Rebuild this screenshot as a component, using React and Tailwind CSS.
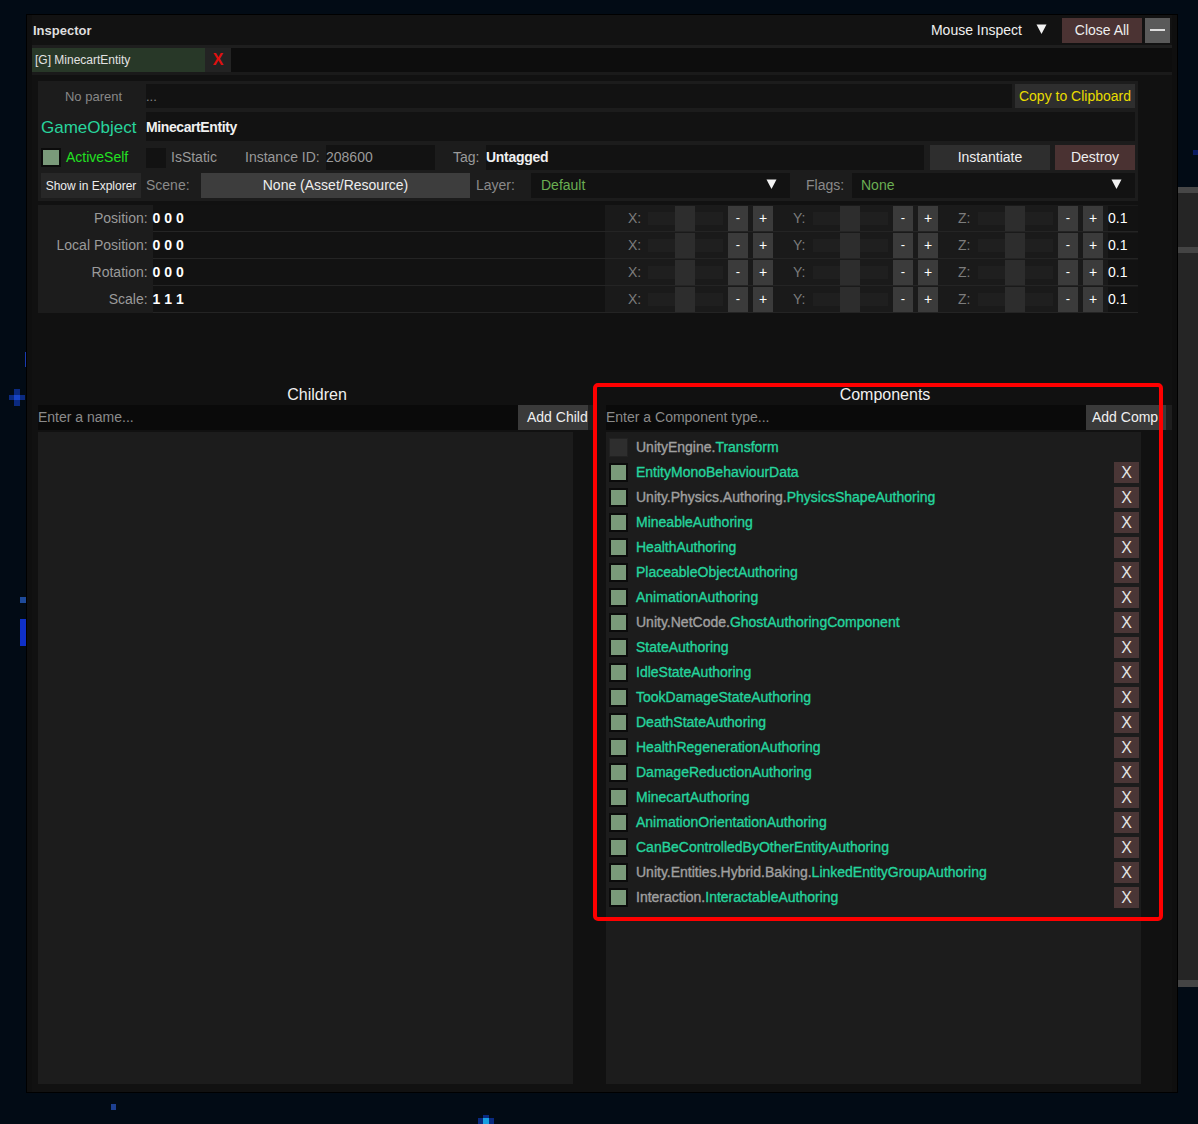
import React from "react";

const Tri = () => (
  <svg width="11" height="10" viewBox="0 0 11 10" className="shrink-0">
    <polygon points="0.5,0.5 10.5,0.5 5.5,10" fill="#f2f2f2" />
  </svg>
);

const comps = [
  ["UnityEngine.", "Transform", false],
  ["", "EntityMonoBehaviourData", true],
  ["Unity.Physics.Authoring.", "PhysicsShapeAuthoring", true],
  ["", "MineableAuthoring", true],
  ["", "HealthAuthoring", true],
  ["", "PlaceableObjectAuthoring", true],
  ["", "AnimationAuthoring", true],
  ["Unity.NetCode.", "GhostAuthoringComponent", true],
  ["", "StateAuthoring", true],
  ["", "IdleStateAuthoring", true],
  ["", "TookDamageStateAuthoring", true],
  ["", "DeathStateAuthoring", true],
  ["", "HealthRegenerationAuthoring", true],
  ["", "DamageReductionAuthoring", true],
  ["", "MinecartAuthoring", true],
  ["", "AnimationOrientationAuthoring", true],
  ["", "CanBeControlledByOtherEntityAuthoring", true],
  ["Unity.Entities.Hybrid.Baking.", "LinkedEntityGroupAuthoring", true],
  ["Interaction.", "InteractableAuthoring", true],
];

const transforms = [
  ["Position", "0 0 0"],
  ["Local Position", "0 0 0"],
  ["Rotation", "0 0 0"],
  ["Scale", "1 1 1"],
];

function AxisGroup({ label }) {
  return (
    <div className="flex items-center h-[25px] w-[145px] shrink-0">
      <span className="w-[20px] text-[14px] text-[#7c7c7c]">{label}:</span>
      <div className="flex items-center w-[75px] h-[25px]">
        <div className="w-[27px] h-[13px] bg-[#1f1f1f]" />
        <div className="w-[20px] h-[25px] bg-[#2d2d2d]" />
        <div className="w-[28px] h-[13px] bg-[#1f1f1f]" />
      </div>
      <div className="ml-[5px] w-[20px] h-[25px] bg-[#3b3b3b] text-white text-[13px] flex items-center justify-center">-</div>
      <div className="ml-[5px] w-[20px] h-[25px] bg-[#3b3b3b] text-white text-[14px] flex items-center justify-center">+</div>
    </div>
  );
}

function TransformRow({ label, value }) {
  return (
    <div className="flex h-[27px]">
      <div className="w-[115px] bg-[#1c1c1c] text-right pr-[5px] text-[14px] text-[#9a9a9a] leading-[27px]">{label}:</div>
      <div className="w-[454px] bg-[#121212] border-b border-[#242424] flex items-center text-[14px] font-bold text-white">{value}</div>
      <div className="flex-1 bg-[#1a1a1a] border-b border-[#242424] flex items-center pl-[23px]">
        <AxisGroup label="X" />
        <div className="w-[20px] shrink-0" />
        <AxisGroup label="Y" />
        <div className="w-[20px] shrink-0" />
        <AxisGroup label="Z" />
        <div className="ml-[5px] w-[30px] h-[25px] bg-[#121212] text-white text-[14px] flex items-center">0.1</div>
      </div>
    </div>
  );
}

function CompRow({ ns, name, on }) {
  return (
    <div className="flex items-center h-[25px]">
      <div className={on ? "w-[19px] h-[19px] bg-[#0b0b0b] p-[2px] shrink-0" : "w-[19px] h-[19px] bg-[#222222] p-[1px] shrink-0"}>
        <div className={on ? "w-full h-full bg-[#7a9a7a]" : "w-full h-full bg-[#2e2e2e]"} />
      </div>
      <div className="ml-[8px] flex-1 text-[14px] tracking-[0px] whitespace-nowrap [-webkit-text-stroke:0.35px]">
        <span className="text-[#a0a0a0]">{ns}</span>
        <span className="text-[#25d49c]">{name}</span>
      </div>
      {on && (
        <div className="w-[25px] h-[21px] bg-[#4a3636] text-[#e6e6e6] text-[16px] flex items-center justify-center">X</div>
      )}
    </div>
  );
}

export default function App() {
  return (
    <div className="relative w-[1198px] h-[1124px] overflow-hidden bg-[#020b15] font-['Liberation_Sans',Arial,sans-serif]">
      {/* backdrop decorations */}
      <div className="absolute left-[1178px] top-[187px] w-[20px] h-[800px] bg-[#252525] flex flex-col">
        <div className="h-[6px] bg-[#474747]" />
        <div className="h-[54px]" />
        <div className="h-[6px] bg-[#444444]" />
        <div className="flex-1" />
        <div className="h-[7px] bg-[#444444]" />
      </div>
      <div className="absolute left-[9px] top-[395px] w-[16px] h-[5px] bg-[#0b2a80]" />
      <div className="absolute left-[14px] top-[389px] w-[6px] h-[17px] bg-[#0b2a80]" />
      <div className="absolute left-[14px] top-[395px] w-[6px] h-[5px] bg-[#1744c8]" />
      <div className="absolute left-[25px] top-[352px] w-[1px] h-[15px] bg-[#1a3ab0]" />
      <div className="absolute left-[20px] top-[597px] w-[6px] h-[6px] bg-[#1e4a9a]" />
      <div className="absolute left-[20px] top-[619px] w-[6px] h-[27px] bg-[#0f30c8]" />
      <div className="absolute left-[111px] top-[1104px] w-[5px] h-[6px] bg-[#1e4090]" />
      <div className="absolute left-[478px] top-[1118px] w-[16px] h-[6px] bg-[#0a2a80]" />
      <div className="absolute left-[483px] top-[1115px] w-[6px] h-[9px] bg-[#0a2a80]" />
      <div className="absolute left-[483px] top-[1118px] w-[6px] h-[6px] bg-[#18a0e0]" />
      <div className="absolute left-[1193px] top-[150px] w-[5px] h-[5px] bg-[#0a1a60]" />

      {/* window */}
      <div className="absolute left-[26px] top-[14px] w-[1152px] h-[1079px] border border-black bg-[#0f0f0f] px-[5px] flex flex-col">
        {/* title bar */}
        <div className="h-[30px] bg-[#121212] flex items-center pl-[1px] pr-[2px]">
          <span className="text-[13px] font-bold text-[#dedede] mt-[2px]">Inspector</span>
          <div className="flex-1" />
          <span className="text-[14px] text-[#f0f0f0] mt-[1px]">Mouse Inspect</span>
          <div className="ml-[14px] mb-[3px]"><Tri /></div>
          <div className="ml-[15px] w-[80px] h-[25px] bg-[#4b3333] text-[14px] text-[#eeeeee] flex items-center justify-center">Close All</div>
          <div className="ml-[3px] w-[25px] h-[25px] bg-[#5a5a5a] flex items-center justify-center">
            <div className="w-[15px] h-[2px] bg-[#dddddd]" />
          </div>
        </div>
        <div className="h-[3px] bg-[#1e1e1e]" />
        {/* tab row */}
        <div className="h-[24px] bg-[#0d0d0d] flex">
          <div className="w-[173px] bg-[#283828] flex items-center pl-[3px] text-[12px] text-[#e2e2e2]">[G] MinecartEntity</div>
          <div className="w-[26px] bg-[#232323] flex items-center justify-center text-[16px] font-bold text-[#e01010]">X</div>
        </div>
        <div className="h-[3px] bg-[#1a1a1a]" />

        {/* content */}
        <div className="flex-1 bg-[#111111] pl-[6px] pt-[6px] flex flex-col">
          {/* header panel */}
          <div className="w-[1100px] h-[120px] bg-[#1c1c1c] p-[3px] flex flex-col">
            <div className="flex h-[24px]">
              <div className="w-[105px] flex items-center justify-center pt-[2px] text-[13px] text-[#888888]">No parent</div>
              <div className="flex-1 bg-[#121212] flex items-center pt-[2px] text-[13px] text-[#888888]">...</div>
              <div className="ml-[3px] w-[120px] bg-[#2e2e2e] flex items-center justify-center pt-[1px] text-[14px] text-[#e8dc00]">Copy to Clipboard</div>
            </div>
            <div className="flex h-[29px] mt-[4px]">
              <div className="w-[105px] flex items-center pt-[2px] text-[17px] text-[#28d49c]">GameObject</div>
              <div className="flex-1 bg-[#121212] flex items-center pt-[2px] text-[14px] font-bold tracking-[-0.4px] text-[#f0f0f0]">MinecartEntity</div>
            </div>
            <div className="flex h-[25px] mt-[4px] items-center text-[14px]">
              <div className="w-[105px] flex items-center">
                <div className="w-[20px] h-[19px] bg-[#0b0b0b] p-[2px]"><div className="w-full h-full bg-[#7a9a7a]" /></div>
                <span className="ml-[5px] text-[#22e022]">ActiveSelf</span>
              </div>
              <div className="w-[99px] flex items-center">
                <div className="w-[20px] h-[20px] bg-[#121212]" />
                <span className="ml-[5px] text-[#9a9a9a]">IsStatic</span>
              </div>
              <span className="w-[81px] text-[#9a9a9a]">Instance ID:</span>
              <div className="w-[109px] h-full bg-[#121212] flex items-center text-[#9a9a9a]">208600</div>
              <div className="w-[18px]" />
              <span className="w-[33px] text-[#9a9a9a]">Tag:</span>
              <div className="w-[438px] h-full bg-[#121212] flex items-center font-bold tracking-[-0.3px] text-[#f0f0f0]">Untagged</div>
              <div className="ml-[6px] w-[120px] h-full bg-[#2e2e2e] flex items-center justify-center text-[#eeeeee]">Instantiate</div>
              <div className="ml-[5px] w-[80px] h-full bg-[#4a3232] flex items-center justify-center text-[#eeeeee]">Destroy</div>
            </div>
            <div className="flex h-[25px] mt-[3px] items-center text-[14px]">
              <div className="w-[100px] h-full bg-[#272727] flex items-center justify-center text-[12px] text-[#eeeeee]">Show in Explorer</div>
              <span className="ml-[5px] w-[55px] text-[#8a8a8a]">Scene:</span>
              <div className="w-[269px] h-full bg-[#3d3d3d] flex items-center justify-center text-[#eeeeee]">None (Asset/Resource)</div>
              <span className="ml-[6px] w-[55px] text-[#8a8a8a]">Layer:</span>
              <div className="w-[259px] h-full bg-[#121212] flex items-center pl-[10px] pr-[13px] text-[#6aae52]">
                <span className="flex-1">Default</span>
                <div className="mb-[4px]"><Tri /></div>
              </div>
              <span className="ml-[16px] w-[46px] text-[#8a8a8a]">Flags:</span>
              <div className="w-[283px] h-full bg-[#121212] flex items-center pl-[9px] pr-[13px] text-[#6aae52]">
                <span className="flex-1">None</span>
                <div className="mb-[4px]"><Tri /></div>
              </div>
            </div>
          </div>

          {/* transform panel */}
          <div className="w-[1100px] mt-[4px] flex flex-col">
            {transforms.map(([l, v]) => (
              <TransformRow key={l} label={l} value={v} />
            ))}
          </div>

          {/* children / components */}
          <div className="mt-[70px] flex">
            <div className="w-[558px] flex flex-col">
              <div className="h-[22px] flex items-center justify-center pt-[2px] text-[16px] text-[#f0f0f0]">Children</div>
              <div className="flex h-[25px]">
                <div className="w-[480px] bg-[#0a0a0a] flex items-center text-[14px] text-[#8a8a8a]">Enter a name...</div>
                <div className="w-[70px] bg-[#3a3a3a] flex items-center pl-[9px] text-[14px] text-[#f0f0f0] whitespace-nowrap">Add Child</div>
                <div className="w-[8px] bg-[#1e1e1e]" />
              </div>
              <div className="mt-[2px] w-[535px] h-[652px] bg-[#1c1c1c]" />
            </div>
            <div className="ml-[10px] w-[566px] flex flex-col">
              <div className="w-[558px] h-[22px] flex items-center justify-center pt-[2px] text-[16px] text-[#f0f0f0]">Components</div>
              <div className="flex h-[25px]">
                <div className="w-[480px] bg-[#0a0a0a] flex items-center text-[14px] text-[#8a8a8a]">Enter a Component type...</div>
                <div className="w-[80px] bg-[#3a3a3a] flex items-center pl-[6px] text-[14px] text-[#f0f0f0] whitespace-nowrap">Add Comp</div>
                <div className="w-[6px] bg-[#1e1e1e]" />
              </div>
              <div className="mt-[2px] w-[535px] h-[652px] bg-[#1c1c1c] pt-[3px] pl-[3px] pr-[2px] flex flex-col">
                {comps.map(([ns, name, on]) => (
                  <CompRow key={name} ns={ns} name={name} on={on} />
                ))}
              </div>
            </div>
          </div>
        </div>
      </div>

      {/* red annotation */}
      <div className="absolute left-[593px] top-[383px] w-[570px] h-[538px] border-[4px] border-[#ff0000] rounded-[5px]" />
    </div>
  );
}
